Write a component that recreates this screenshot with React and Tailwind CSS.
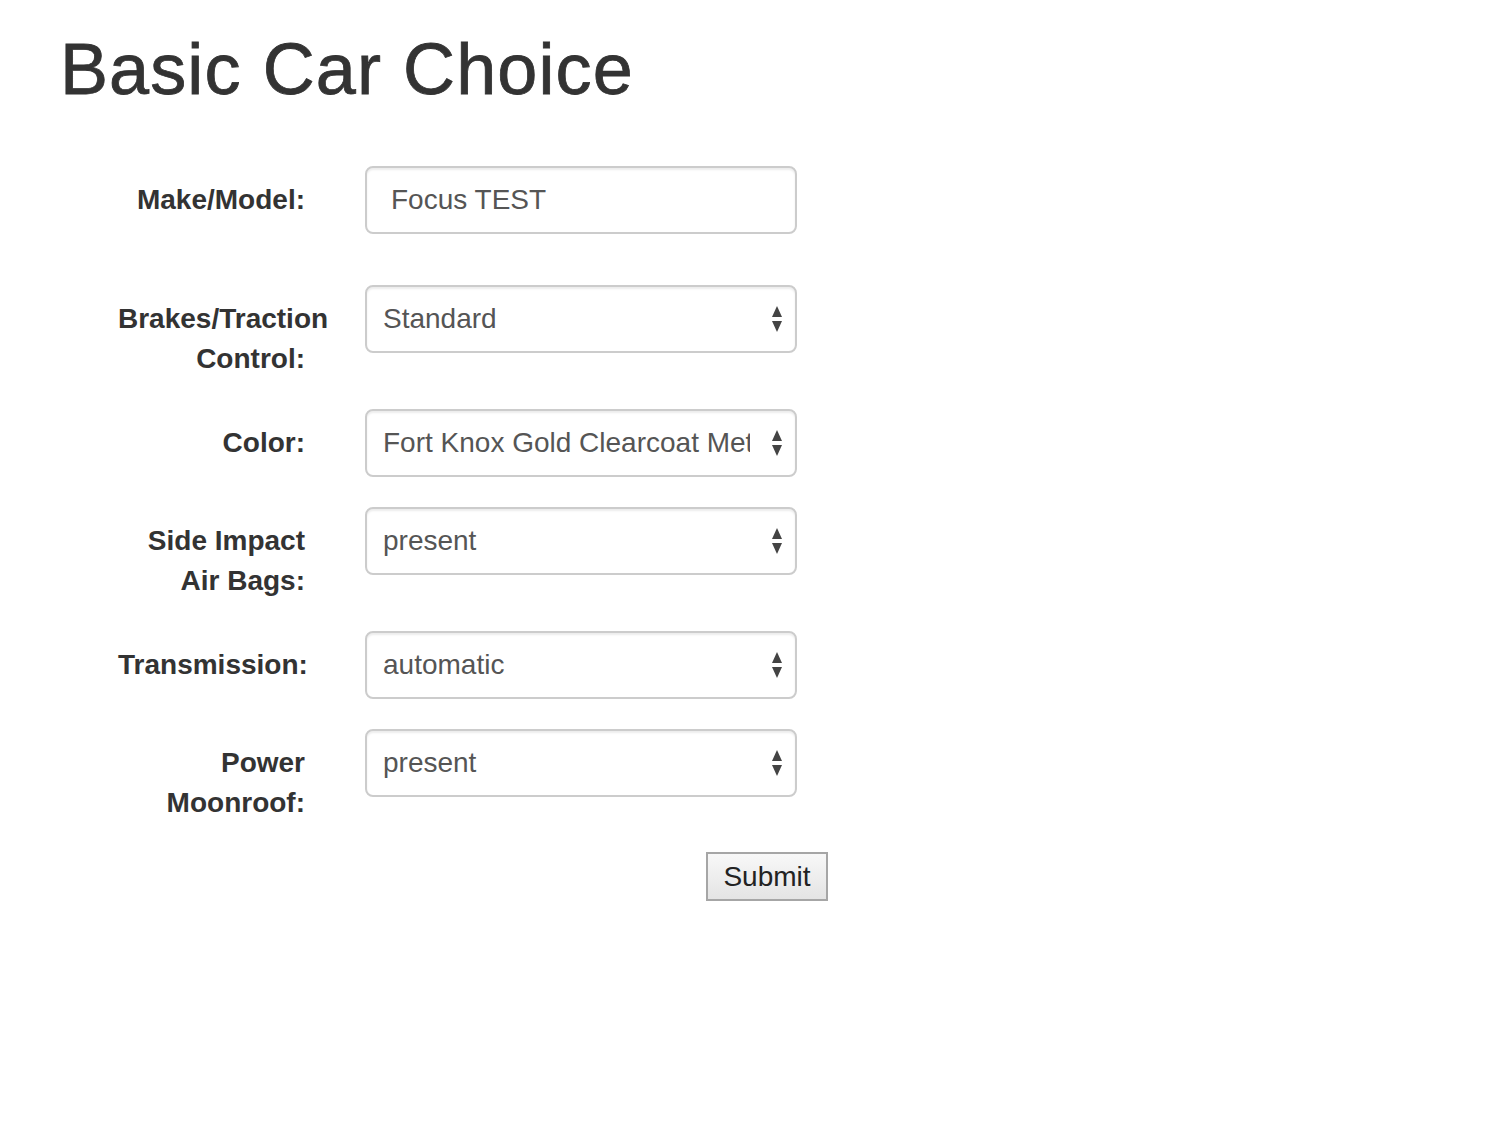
import React from "react";

const font = { fontFamily: '"Liberation Sans", Arial, Helvetica, sans-serif' };

function Arrows() {
  return (
    <svg width="12" height="28" viewBox="0 0 12 28" className="shrink-0">
      <polygon points="6,1 11,12 1,12" fill="#444" />
      <polygon points="1,16 11,16 6,27" fill="#444" />
    </svg>
  );
}

function Row({ label, children, className = "" }) {
  return (
    <div className={"flex items-start " + className}>
      <div className="w-[187px] ml-[118px] text-right font-bold text-[28px] leading-[40px] pt-[14px] text-[#333] whitespace-normal">
        {label}
      </div>
      <div className="ml-[60px] w-[432px]">{children}</div>
    </div>
  );
}

function Select({ value }) {
  return (
    <div className="h-[68px] w-[432px] rounded-[8px] border-2 border-[#cccccc] bg-white shadow-[inset_0_2px_2px_rgba(0,0,0,0.075)] flex items-center pl-[16px] pr-[12px]">
      <div className="flex-1 overflow-hidden whitespace-nowrap text-[28px] text-[#555] mr-[21px]">{value}</div>
      <Arrows />
    </div>
  );
}

export default function App() {
  return (
    <div className="min-h-[1132px] bg-white text-[#333]" style={font}>
      <h1 className="pl-[60px] pt-[30px] text-[72px] leading-[79px] font-normal text-[#333] tracking-[1.1px] [-webkit-text-stroke:0.8px_#333]">
        Basic Car Choice
      </h1>
      <div className="mt-[57px]">
        <Row label="Make/Model:" className="mb-[51px]">
          <div className="h-[68px] w-[432px] rounded-[8px] border-2 border-[#cccccc] bg-white shadow-[inset_0_2px_2px_rgba(0,0,0,0.075)] flex items-center pl-[24px] text-[28px] text-[#555]">
            Focus TEST
          </div>
        </Row>
        <Row label="Brakes/Traction Control:" className="mb-[30px]">
          <Select value="Standard" />
        </Row>
        <Row label="Color:" className="mb-[30px]">
          <Select value="Fort Knox Gold Clearcoat Metallic" />
        </Row>
        <Row label="Side Impact Air Bags:" className="mb-[30px]">
          <Select value="present" />
        </Row>
        <Row label="Transmission:" className="mb-[30px]">
          <Select value="automatic" />
        </Row>
        <Row label="Power Moonroof:" className="mb-[29px]">
          <Select value="present" />
        </Row>
        <div className="pl-[706px]">
          <button className="h-[49px] w-[122px] border-2 border-[#a6a6a6] bg-gradient-to-b from-[#f8f8f8] to-[#e4e4e4] text-[28px] text-[#222] flex items-center justify-center">
            Submit
          </button>
        </div>
      </div>
    </div>
  );
}
